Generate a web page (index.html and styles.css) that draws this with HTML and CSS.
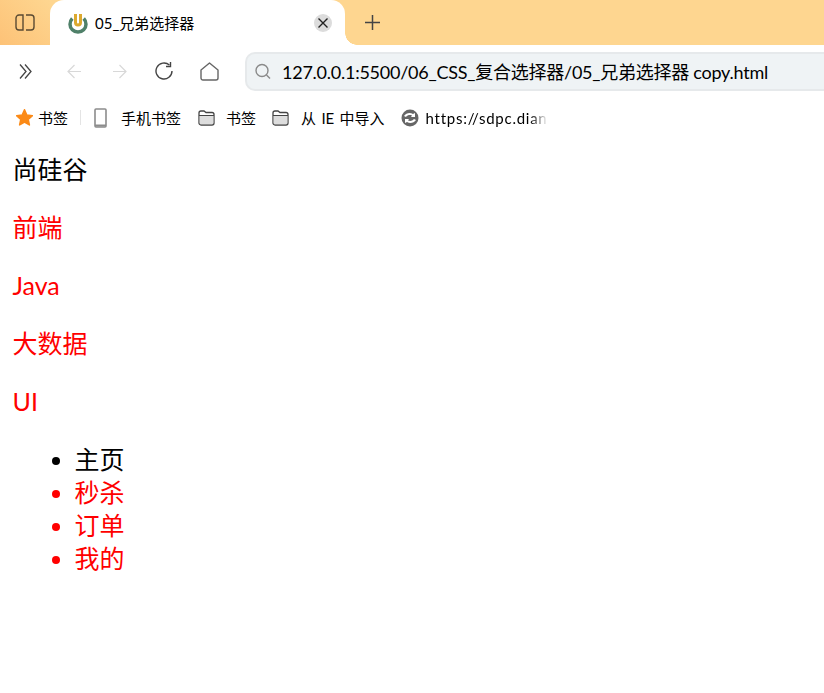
FILE: index.html
```html
<!DOCTYPE html>
<html lang="zh-CN">
<head>
  <meta charset="UTF-8">
  <title>05_兄弟选择器</title>
  <link rel="stylesheet" href="styles.css">
</head>
<body>
  <!-- Tab strip -->
  <header class="tabbar">
    <div class="sidebar-btn">
      <svg width="20" height="17" viewBox="0 0 20 17" fill="none" stroke="#5a4a32" stroke-width="1.4"><path d="M8 1H4a3 3 0 0 0-3 3v9a3 3 0 0 0 3 3h4z"/><path d="M11 1h5a3 3 0 0 1 3 3v9a3 3 0 0 1-3 3h-5"/></svg>
    </div>
    <div class="tab">
      <svg class="favicon" width="20" height="20" viewBox="0 0 20 20" fill="none"><path d="M4.300 4.500a8 8 0 1 0 11.400 0" stroke="#4f8069" stroke-width="3.500"/><path d="M7.500 0v8.500a2.500 2.500 0 0 0 5 0V0" stroke="#dca92f" stroke-width="3"/></svg>
      <span class="tab-title">05_兄弟选择器</span>
      <span class="tab-close">
        <svg width="10" height="10" viewBox="0 0 10 10" stroke="#222" stroke-width="1.400"><path d="M.5.500l9 9M9.500.500l-9 9"/></svg>
      </span>
    </div>
    <div class="new-tab">
      <svg width="15" height="15" viewBox="0 0 15 15" stroke="#444" stroke-width="1.500"><path d="M7.500 0v15M0 7.500h15"/></svg>
    </div>
  </header>

  <!-- Toolbar -->
  <div class="toolbar">
    <svg class="tool tool-more" width="13" height="15" viewBox="0 0 13 15" fill="none" stroke="#444" stroke-width="1.300"><path d="M1 .5l6 7-6 7M6 .5l6 7-6 7"/></svg>
    <svg class="tool tool-back" width="14" height="15" viewBox="0 0 14 15" fill="none" stroke="#d8d8d8" stroke-width="1.200"><path d="M14 7.500H1M7.500 1L1 7.500 7.500 14"/></svg>
    <svg class="tool tool-fwd" width="14" height="15" viewBox="0 0 14 15" fill="none" stroke="#d8d8d8" stroke-width="1.200"><path d="M0 7.500h13M6.500 1L13 7.500 6.500 14"/></svg>
    <svg class="tool tool-reload" width="18" height="18" viewBox="0 0 18 18" fill="none" stroke="#444" stroke-width="1.400"><path d="M17 9a8 8 0 1 1-2.600-5.900"/><path d="M15.500 0v4.500H11"/></svg>
    <svg class="tool tool-home" width="19" height="19" viewBox="0 0 19 19" fill="none" stroke="#666" stroke-width="1.400"><path d="M1 8L9.500 1 18 8v8a2 2 0 0 1-2 2H3a2 2 0 0 1-2-2z" stroke-linejoin="round"/></svg>
    <div class="address">
      <svg width="16" height="17" viewBox="0 0 16 17" fill="none" stroke="#8a8a8a" stroke-width="1.400"><circle cx="7" cy="7.500" r="6"/><path d="M11.500 12l3.500 3.500"/></svg>
      <span class="url">127.0.0.1:5500/06_CSS_复合选择器/05_兄弟选择器 copy.html</span>
    </div>
  </div>

  <!-- Bookmarks -->
  <nav class="bookmarks">
    <span class="bm bm-first">
      <svg width="17" height="17" viewBox="1 1 22 22" fill="#fb8a17" stroke="#fb8a17" stroke-width="2" stroke-linejoin="round"><path d="M12 2l3 6.800 7.200.8-5.400 4.800 1.500 7.200L12 18l-6.300 3.600 1.500-7.200L1.800 9.600 9 8.800z"/></svg>
      书签
    </span>
    <span class="bm-sep"></span>
    <span class="bm bm-phone">
      <svg width="13" height="20" viewBox="0 0 13 20" fill="none" stroke="#8c8c8c" stroke-width="1.600"><rect x="1" y="1" width="11" height="18" rx="1"/><path d="M1 17.500h11" stroke-width="2"/></svg>
      手机书签
    </span>
    <span class="bm">
      <svg class="folder" width="17" height="16" viewBox="0 0 17 16"><path d="M1 3a2 2 0 0 1 2-2h3l2 1.500h6a2 2 0 0 1 2 2V13a2 2 0 0 1-2 2H3a2 2 0 0 1-2-2z" fill="#fff" stroke="#444" stroke-width="1.300"/><path d="M1.700 6h13.600v7a1.300 1.300 0 0 1-1.300 1.300H3A1.300 1.300 0 0 1 1.700 13z" fill="#ddd"/><path d="M1 5.500h15" stroke="#444"/></svg>
      书签
    </span>
    <span class="bm bm-import">
      <svg class="folder" width="17" height="16" viewBox="0 0 17 16"><path d="M1 3a2 2 0 0 1 2-2h3l2 1.500h6a2 2 0 0 1 2 2V13a2 2 0 0 1-2 2H3a2 2 0 0 1-2-2z" fill="#fff" stroke="#444" stroke-width="1.300"/><path d="M1.700 6h13.600v7a1.300 1.300 0 0 1-1.300 1.300H3A1.300 1.300 0 0 1 1.700 13z" fill="#ddd"/><path d="M1 5.500h15" stroke="#444"/></svg>
      从 IE 中导入
    </span>
    <span class="bm bm-last">
      <svg width="18" height="18" viewBox="0 0 18 18"><circle cx="9" cy="9" r="8.500" fill="#666"/><path d="M3 7c2-3 6-4 9-2l2-1v4h-4l1-1.500C9 5.500 6.500 6 5 8zM15 11c-2 3-6 4-9 2l-2 1v-4h4l-1 1.500c2 1 4.500.5 6-1.500z" fill="#fff"/></svg>
      <span class="bm-fade">https://sdpc.dian</span>
    </span>
  </nav>

  <!-- Page content -->
  <main class="page">
    <p>尚硅谷</p>
    <p class="red">前端</p>
    <p class="red">Java</p>
    <p class="red">大数据</p>
    <p class="red">UI</p>
    <ul>
      <li>主页</li>
      <li class="red">秒杀</li>
      <li class="red">订单</li>
      <li class="red">我的</li>
    </ul>
  </main>
</body>
</html>
```

FILE: styles.css
```css
* {
  box-sizing: border-box;
}
html, body {
  margin: 0;
  padding: 0;
  background: #fff;
}
body {
  font-family: Lato, "Noto Sans CJK SC", sans-serif;
  color: #000;
  overflow: hidden;
}

/* tab strip */
.tabbar {
  display: flex;
  height: 45px;
  background: #fed690;
}
.sidebar-btn {
  width: 50px;
  display: flex;
  align-items: center;
  justify-content: center;
  background: linear-gradient(45deg, #fdc277, #fed690);
}
.tab {
  position: relative;
  width: 295px;
  display: flex;
  align-items: center;
  padding: 0 13px 0 18px;
  background: #fff;
  border-radius: 14px 14px 0 0;
}
/* little flare at the tab's bottom right corner */
.tab::after {
  content: "";
  position: absolute;
  right: -12px;
  bottom: 0;
  width: 12px;
  height: 12px;
  background: radial-gradient(circle at 100% 0, #fed690 11.5px, #fff 12px);
}
.favicon {
  margin-top: 2px;
}
.tab-title {
  margin-left: 7px;
  font-size: 15px;
  flex: 1;
}
.tab-close {
  width: 18px;
  height: 18px;
  border-radius: 50%;
  background: #dcdcdc;
  display: flex;
  align-items: center;
  justify-content: center;
}
.new-tab {
  width: 55px;
  display: flex;
  align-items: center;
  justify-content: center;
}

/* toolbar */
.toolbar {
  height: 52px;
  display: flex;
  align-items: center;
  padding-left: 19px;
}
.tool-back {
  margin-left: 35px;
}
.tool-fwd {
  margin-left: 32px;
}
.tool-reload {
  margin-left: 28px;
}
.tool-home {
  margin-left: 27px;
}
.address {
  margin-left: 26px;
  flex: 1;
  height: 39px;
  display: flex;
  align-items: center;
  padding-left: 8px;
  background: #eff3f5;
  border: 2px solid #e6e9eb;
  border-right: none;
  border-radius: 10px 0 0 10px;
}
.url {
  margin-left: 11px;
  font-size: 18px;
  letter-spacing: -0.25px;
  white-space: nowrap;
}

/* bookmarks */
.bookmarks {
  height: 41px;
  display: flex;
  align-items: center;
  padding-left: 16px;
  font-size: 15px;
}
.bm {
  display: flex;
  align-items: center;
  gap: 11px;
  margin-right: 16px;
  white-space: nowrap;
}
.bm-first {
  gap: 5px;
  margin-right: 12px;
}
.bm-sep {
  width: 1px;
  height: 15px;
  background: #e4e4e4;
  margin-right: 13px;
}
.bm-phone {
  gap: 14px;
  margin-right: 17px;
}
.bm-import {
  gap: 12px;
  word-spacing: 1.5px;
}
.bm-last {
  gap: 7px;
}
.bm-fade {
  width: 122px;
  overflow: hidden;
  letter-spacing: 0.75px;
  -webkit-mask-image: linear-gradient(90deg, #000 85%, transparent);
  mask-image: linear-gradient(90deg, #000 85%, transparent);
}

/* page */
.page {
  padding: 15px 12.5px 0;
  font-size: 25px;
  line-height: 33px;
}
.page p {
  margin: 0 0 25px;
}
.page ul {
  margin: 0;
  padding-left: 62px;
}
.red {
  color: #f00;
}
```
